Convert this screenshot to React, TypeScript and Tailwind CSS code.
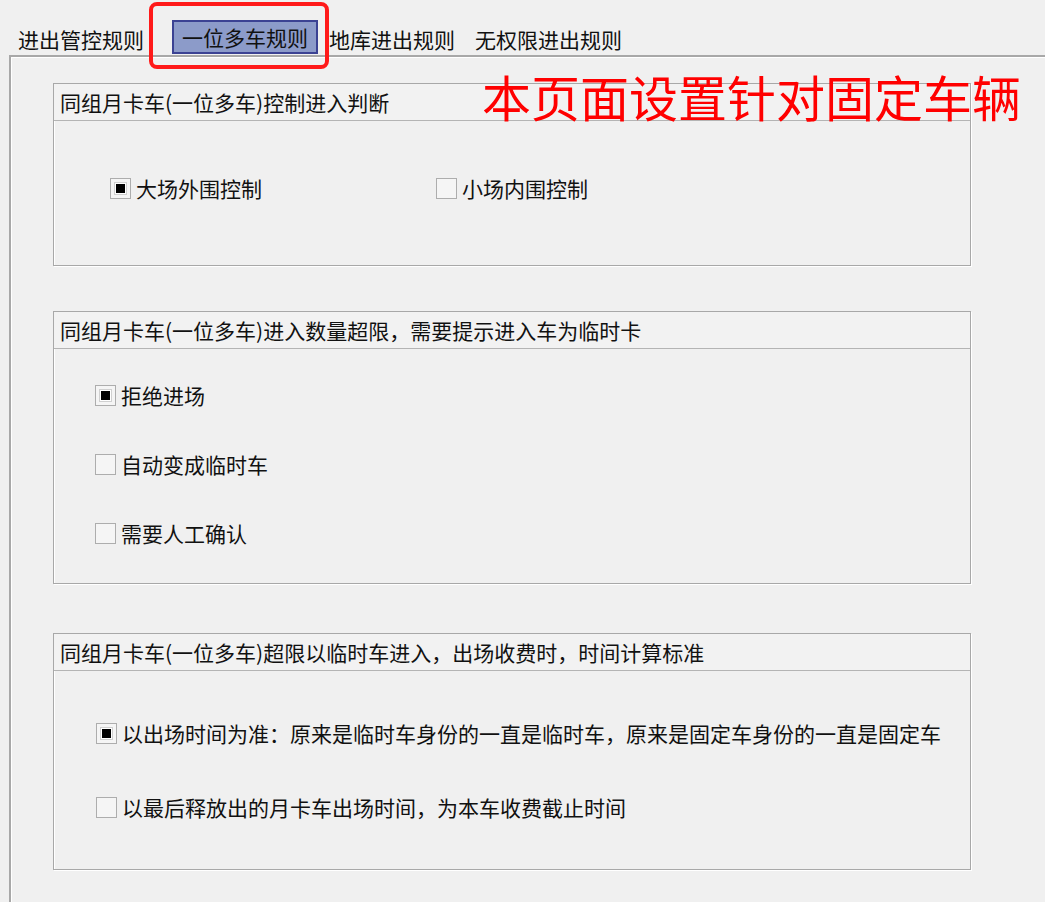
import React from "react";

const font = { fontFamily: '"Noto Sans CJK SC", "Noto Sans", sans-serif' };

function Check({ checked, label }: { checked?: boolean; label: string }) {
  return (
    <div className="flex items-center gap-[5px] h-[22px]">
      <div className="w-[21px] h-[21px] border border-[#adadad] bg-[#f5f5f5] flex items-center justify-center">
        {checked && (
          <div className="w-[13px] h-[13px] border border-[#d0d0d0] bg-white flex items-center justify-center">
            <div className="w-[9px] h-[9px] bg-black" />
          </div>
        )}
      </div>
      <span className="text-[21px] leading-none text-[#111]">{label}</span>
    </div>
  );
}

function GroupBox({ title, height, children }: { title: string; height: number; children: React.ReactNode }) {
  return (
    <div
      className="w-[918px] border border-[#a8a8a8] shadow-[inset_1px_1px_0_#fff,1px_1px_0_#fff] flex flex-col"
      style={{ height }}
    >
      <div className="h-[37px] border-b border-[#b4b4b4] bg-[#f2f2f2] flex items-center pl-[6px] text-[21px] text-[#111] leading-none">
        {title}
      </div>
      <div className="flex-1">{children}</div>
    </div>
  );
}

export default function App() {
  return (
    <div className="relative w-[1045px] h-[902px] overflow-hidden bg-[#f0f0f0]" style={font}>
      {/* tab strip */}
      <div className="h-[55px] flex items-end text-[21px] text-[#111] leading-none">
        <div className="pl-[18px] w-[172px] pb-[5px]">进出管控规则</div>
        <div className="w-[146px] h-[34px] mb-[1px] border-2 border-[#3b4293] bg-[#8c9bc9] flex items-center justify-center">
          一位多车规则
        </div>
        <div className="pl-[11px] w-[157px] pb-[5px]">地库进出规则</div>
        <div className="pb-[5px]">无权限进出规则</div>
      </div>

      {/* tab page */}
      <div className="ml-[9px] w-[1060px] h-[900px] border-t-2 border-l-2 border-[#a8a8a8] shadow-[inset_1px_1px_0_#fff] pl-[42px] pt-[26px]">
        <GroupBox title="同组月卡车(一位多车)控制进入判断" height={183}>
          <div className="flex pt-[56px]">
            <div className="pl-[56px] w-[382px]">
              <Check checked label="大场外围控制" />
            </div>
            <Check label="小场内围控制" />
          </div>
        </GroupBox>

        <div className="h-[45px]" />
        <GroupBox title="同组月卡车(一位多车)进入数量超限，需要提示进入车为临时卡" height={273}>
          <div className="flex flex-col pl-[41px] pt-[35px] gap-[47px]">
            <Check checked label="拒绝进场" />
            <Check label="自动变成临时车" />
            <Check label="需要人工确认" />
          </div>
        </GroupBox>

        <div className="h-[49px]" />
        <GroupBox title="同组月卡车(一位多车)超限以临时车进入，出场收费时，时间计算标准" height={237}>
          <div className="flex flex-col pl-[42px] pt-[51px] gap-[52px]">
            <Check checked label="以出场时间为准：原来是临时车身份的一直是临时车，原来是固定车身份的一直是固定车" />
            <Check label="以最后释放出的月卡车出场时间，为本车收费截止时间" />
          </div>
        </GroupBox>
      </div>

      {/* annotations */}
      <div className="absolute left-[149px] top-[2px] w-[180px] h-[67px] border-4 border-[#ff1a1a] rounded-[8px]" />
      <div className="absolute left-[482px] top-[71px] text-[49px] leading-none text-[#ff0000] whitespace-nowrap">
        本页面设置针对固定车辆
      </div>
    </div>
  );
}
